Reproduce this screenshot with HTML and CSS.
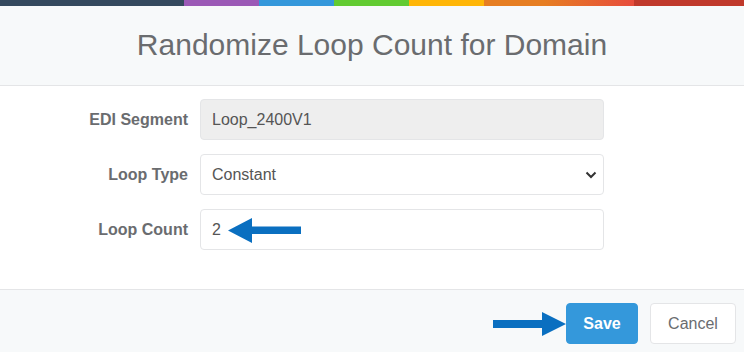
FILE: index.html
```html
<!DOCTYPE html>
<html>
<head>
<meta charset="utf-8">
<link rel="stylesheet" href="styles.css">
</head>
<body>
<div class="colorbar">
  <span class="c1"></span><span class="c2"></span><span class="c3"></span><span class="c4"></span><span class="c5"></span><span class="c6"></span><span class="c7"></span>
</div>
<div class="modal-header">
  <h4 class="modal-title">Randomize Loop Count for Domain</h4>
</div>
<div class="modal-body">
  <div class="form-row">
    <label class="form-label">EDI Segment</label>
    <div class="form-control readonly">Loop_2400V1</div>
  </div>
  <div class="form-row">
    <label class="form-label">Loop Type</label>
    <div class="form-control select">Constant
      <svg class="chevron" width="12" height="8" viewBox="0 0 12 8"><path d="M1.5 1.5 L6 6 L10.5 1.5" fill="none" stroke="#333" stroke-width="2"/></svg>
    </div>
  </div>
  <div class="form-row">
    <label class="form-label">Loop Count</label>
    <div class="form-control count">2
      <svg class="arrow-left" width="74" height="25" viewBox="0 0 74 25"><polygon points="0,12.5 24,0 24,8.5 73,8.5 73,16 24,16 24,25" fill="#0a6fc0"/></svg>
    </div>
  </div>
</div>
<div class="modal-footer">
  <svg class="arrow-right" width="73" height="24" viewBox="0 0 73 24"><polygon points="73,12 49,0 49,8 0,8 0,16 49,16 49,24" fill="#0a6fc0"/></svg>
  <button class="btn btn-primary">Save</button>
  <button class="btn btn-default">Cancel</button>
</div>
</body>
</html>
```
FILE: styles.css
```css
html, body {
  margin: 0;
  padding: 0;
  background: #fff;
  font-family: "Liberation Sans", Arial, sans-serif;
  color: #6a6c6f;
}
.colorbar {
  display: flex;
  height: 6px;
}
.colorbar span { display: block; height: 6px; }
.c1 { width: 184px; background: #34495e; }
.c2 { width: 75px; background: #9b59b6; }
.c3 { width: 75px; background: #3498db; }
.c4 { width: 75px; background: #62cb31; }
.c5 { width: 75px; background: #ffb606; }
.c6 { width: 150px; background: linear-gradient(to right, #e67e22 0%, #e67e22 40%, #e74c3c 100%); }
.c7 { flex: 1; background: #c0392b; }

.modal-header {
  background: #f7f9fa;
  border-bottom: 1px solid #e4e5e7;
  height: 79px;
  display: flex;
  align-items: center;
  justify-content: center;
}
.modal-title {
  margin: 0;
  font-size: 30px;
  font-weight: normal;
  color: #6a6c6f;
  line-height: 1;
  padding-bottom: 2px;
}
.modal-body {
  padding: 13px 140px 39px 0;
  display: flex;
  flex-direction: column;
  gap: 14px;
}
.form-row {
  display: flex;
  align-items: center;
  gap: 12px;
}
.form-label {
  width: 188px;
  text-align: right;
  font-weight: bold;
  font-size: 16px;
  color: #6a6c6f;
}
.form-control {
  position: relative;
  flex: 1;
  height: 40px;
  border: 1px solid #e4e5e7;
  border-radius: 4px;
  padding: 0 11px;
  display: flex;
  align-items: center;
  font-size: 16px;
  color: #555;
  background: #fff;
  box-sizing: border-box;
  height: 41px;
}
.form-control.readonly { background: #eeeeee; }
.chevron {
  position: absolute;
  right: 6px;
  top: 16px;
}
.arrow-left {
  position: absolute;
  left: 27px;
  top: 8px;
}
.modal-footer {
  background: #f7f9fa;
  border-top: 1px solid #e4e5e7;
  padding: 13px 8px 20px 0;
  display: flex;
  justify-content: flex-end;
  align-items: center;
  gap: 12px;
}
.arrow-right {
  margin-right: -12px;
}
.btn {
  height: 41px;
  border-radius: 4px;
  font-family: "Liberation Sans", Arial, sans-serif;
  font-size: 16px;
  padding: 0;
  cursor: pointer;
}
.btn-primary {
  width: 72px;
  background: #3498db;
  border: 1px solid #3498db;
  color: #fff;
  font-weight: bold;
}
.btn-default {
  width: 86px;
  background: #fff;
  border: 1px solid #e4e5e7;
  color: #6a6c6f;
}
```
